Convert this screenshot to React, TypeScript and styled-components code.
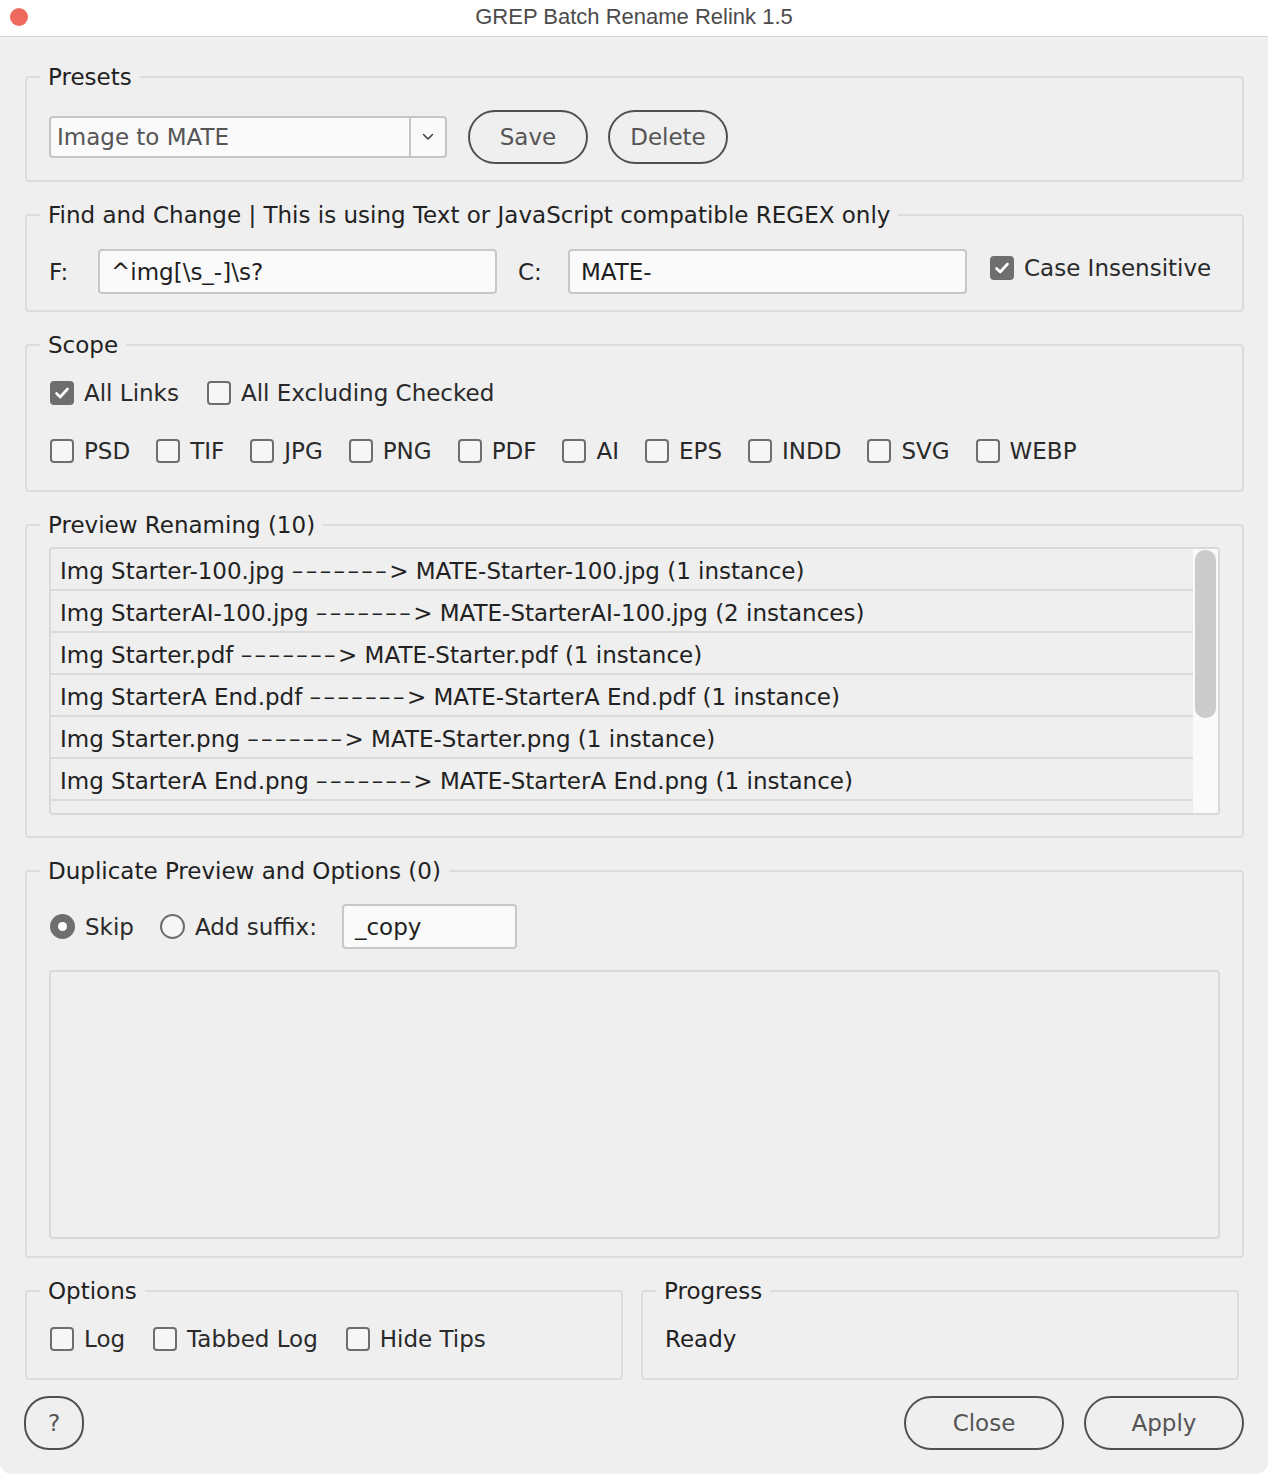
import React from "react";
import styled, { createGlobalStyle } from "styled-components";

const Global = createGlobalStyle`
  html, body { margin: 0; padding: 0; background: #ffffff; }
  body { font-family: "DejaVu Sans", "Liberation Sans", sans-serif; }
  * { box-sizing: border-box; }
`;

const Window = styled.div`
  width: 1268px;
  height: 1474px;
  background: #efefef;
  border-radius: 0 0 12px 12px;
  overflow: hidden;
  display: flex;
  flex-direction: column;
`;

const TitleBar = styled.div`
  flex: none;
  height: 37px;
  background: #ffffff;
  border-bottom: 1px solid #d4d4d4;
  display: grid;
  grid-template-columns: 1fr auto 1fr;
  align-items: center;
  padding-bottom: 4px;
`;

const CloseDot = styled.span`
  width: 18px;
  height: 18px;
  border-radius: 50%;
  background: #ee6a5e;
  margin-left: 10px;
  margin-top: 2px;
`;

const Title = styled.div`
  font-family: "Liberation Sans", Arial, sans-serif;
  font-size: 22px;
  color: #4b4b4b;
  margin-top: 2px;
`;

const Body = styled.div`
  flex: 1;
  display: flex;
  flex-direction: column;
  gap: 20px;
  padding: 27px 24px 24px 25px;
  color: #262626;
  font-size: 23px;
`;

const Panel = styled.fieldset<{ $pt: number; $pb: number }>`
  margin: 0;
  min-width: 0;
  border: 2px solid #dcdcdc;
  border-radius: 4px;
  padding: ${(p) => p.$pt}px 22px ${(p) => p.$pb}px 22px;
`;

const Legend = styled.legend`
  font-size: 23px;
  line-height: 26px;
  padding: 0 8px;
  margin-left: -9px;
  color: #222;
`;

const Row = styled.div<{ $gap: number }>`
  display: flex;
  align-items: center;
  gap: ${(p) => p.$gap}px;
`;

const Stack = styled.div<{ $gap: number }>`
  display: flex;
  flex-direction: column;
  gap: ${(p) => p.$gap}px;
`;

const Select = styled.div`
  width: 398px;
  height: 42px;
  display: flex;
  align-items: stretch;
  background: #fafafa;
  border: 2px solid #c6c6c6;
  border-radius: 4px;
  margin-right: 1px;
`;

const SelectValue = styled.div`
  flex: 1;
  display: flex;
  align-items: center;
  padding-left: 6px;
  color: #555;
`;

const SelectArrow = styled.div`
  width: 36px;
  border-left: 2px solid #c6c6c6;
  display: flex;
  align-items: center;
  justify-content: center;
`;

const PillButton = styled.button<{ $w: number }>`
  width: ${(p) => p.$w}px;
  height: 54px;
  border: 2px solid #505050;
  border-radius: 27px;
  background: transparent;
  font-family: "DejaVu Sans", sans-serif;
  font-size: 23px;
  color: #555;
  padding: 0;
  display: flex;
  align-items: center;
  justify-content: center;
`;

const HelpButton = styled(PillButton)`
  border-radius: 25px;
  margin-left: -1px;
`;

const FieldLabel = styled.span<{ $w: number }>`
  width: ${(p) => p.$w}px;
  flex: none;
`;

const TextInput = styled.div<{ $w: number; $ml?: number }>`
  width: ${(p) => p.$w}px;
  height: 45px;
  margin-left: ${(p) => p.$ml ?? 0}px;
  background: #fafafa;
  border: 2px solid #c8c8c8;
  border-radius: 4px;
  display: flex;
  align-items: center;
  padding-left: 11px;
  color: #1e1e1e;
`;

const CheckItem = styled.label<{ $lift?: number }>`
  display: flex;
  align-items: center;
  gap: 10px;
  line-height: 26px;
  color: #2a2a2a;
  margin-bottom: ${(p) => p.$lift ?? 0}px;
`;

const Box = styled.span<{ $on?: boolean }>`
  width: 24px;
  height: 24px;
  border-radius: 4px;
  border: 2px solid #6e6e6e;
  background: ${(p) => (p.$on ? "#6e6e6e" : "#f6f6f6")};
  display: flex;
  align-items: center;
  justify-content: center;
  flex: none;
  margin-left: 1px;
`;

const Radio = styled.span<{ $on?: boolean }>`
  width: 25px;
  height: 25px;
  border-radius: 50%;
  border: 2px solid #6e6e6e;
  background: ${(p) => (p.$on ? "#6e6e6e" : "#f6f6f6")};
  display: flex;
  align-items: center;
  justify-content: center;
  flex: none;
  margin-left: 1px;
`;

const RadioDot = styled.span`
  width: 9px;
  height: 9px;
  border-radius: 50%;
  background: #fff;
`;

const ListBox = styled.div`
  height: 268px;
  border: 2px solid #d9d9d9;
  border-radius: 4px;
  display: flex;
  overflow: hidden;
  background: #efefef;
`;

const ListRows = styled.div`
  flex: 1;
  overflow: hidden;
`;

const ListRow = styled.div`
  height: 42px;
  border-bottom: 2px solid #dadada;
  display: flex;
  align-items: center;
  padding: 3px 0 0 9px;
  white-space: pre;
  color: #222;
`;

const Arrow = styled.span`
  letter-spacing: 2.4px;
`;

const ScrollTrack = styled.div`
  width: 25px;
  background: #fafafa;
  padding: 1px 2px 0 2px;
`;

const ScrollThumb = styled.div`
  height: 168px;
  border-radius: 10px;
  background: #cbcbcb;
`;

const LogArea = styled.div`
  height: 269px;
  border: 2px solid #d9d9d9;
  border-radius: 4px;
  background: #efefef;
`;

const BottomGrid = styled.div`
  display: grid;
  grid-template-columns: 598px 598px;
  gap: 18px;
`;

const StatusText = styled.div`
  line-height: 26px;
  color: #222;
`;

const Footer = styled.div`
  margin-top: -4px;
  display: flex;
  align-items: center;
  gap: 20px;
`;

const Spacer = styled.div`
  flex: 1;
`;

const Check = () => (
  <svg width="16" height="14" viewBox="0 0 16 14">
    <path d="M2.5 7.5 L6.2 11 L13.5 3" fill="none" stroke="#fff" strokeWidth="2.6" strokeLinecap="round" strokeLinejoin="round" />
  </svg>
);

const CheckBox = ({ on, label, lift }: { on?: boolean; label: string; lift?: number }) => (
  <CheckItem $lift={lift}>
    <Box $on={on}>{on && <Check />}</Box>
    {label}
  </CheckItem>
);

const RadioItem = ({ on, label }: { on?: boolean; label: string }) => (
  <CheckItem>
    <Radio $on={on}>{on && <RadioDot />}</Radio>
    {label}
  </CheckItem>
);

const previews: [string, string][] = [
  ["Img Starter-100.jpg", "MATE-Starter-100.jpg (1 instance)"],
  ["Img StarterAI-100.jpg", "MATE-StarterAI-100.jpg (2 instances)"],
  ["Img Starter.pdf", "MATE-Starter.pdf (1 instance)"],
  ["Img StarterA End.pdf", "MATE-StarterA End.pdf (1 instance)"],
  ["Img Starter.png", "MATE-Starter.png (1 instance)"],
  ["Img StarterA End.png", "MATE-StarterA End.png (1 instance)"],
  ["Img Starter.psd", "MATE-Starter.psd (1 instance)"],
  ["Img StarterA End.psd", "MATE-StarterA End.psd (1 instance)"],
  ["Img Starter.tif", "MATE-Starter.tif (1 instance)"],
  ["Img StarterA End.tif", "MATE-StarterA End.tif (1 instance)"],
];

const types = ["PSD", "TIF", "JPG", "PNG", "PDF", "AI", "EPS", "INDD", "SVG", "WEBP"];

export default function App() {
  return (
    <>
      <Global />
      <Window>
        <TitleBar>
          <CloseDot />
          <Title>GREP Batch Rename Relink 1.5</Title>
          <span />
        </TitleBar>
        <Body>
          <Panel $pt={20} $pb={16}>
            <Legend>Presets</Legend>
            <Row $gap={20}>
              <Select>
                <SelectValue>Image to MATE</SelectValue>
                <SelectArrow>
                  <svg width="12" height="8" viewBox="0 0 12 8">
                    <path d="M1.5 1.5 L6 6 L10.5 1.5" fill="none" stroke="#444" strokeWidth="1.6" strokeLinecap="round" strokeLinejoin="round" />
                  </svg>
                </SelectArrow>
              </Select>
              <PillButton $w={120}>Save</PillButton>
              <PillButton $w={120}>Delete</PillButton>
            </Row>
          </Panel>

          <Panel $pt={21} $pb={16}>
            <Legend>Find and Change | This is using Text or JavaScript compatible REGEX only</Legend>
            <Row $gap={0}>
              <FieldLabel $w={49}>F:</FieldLabel>
              <TextInput $w={399}>^img[\s_-]\s?</TextInput>
              <FieldLabel $w={21} />
              <FieldLabel $w={50}>C:</FieldLabel>
              <TextInput $w={399}>MATE-</TextInput>
              <FieldLabel $w={22} />
              <CheckBox on label="Case Insensitive" lift={7} />
            </Row>
          </Panel>

          <Panel $pt={22} $pb={26}>
            <Legend>Scope</Legend>
            <Stack $gap={32}>
              <Row $gap={27}>
                <CheckBox on label="All Links" />
                <CheckBox label="All Excluding Checked" />
              </Row>
              <Row $gap={25}>
                {types.map((t) => (
                  <CheckBox key={t} label={t} />
                ))}
              </Row>
            </Stack>
          </Panel>

          <Panel $pt={9} $pb={21}>
            <Legend>Preview Renaming (10)</Legend>
            <ListBox>
              <ListRows>
                {previews.map(([from, to]) => (
                  <ListRow key={from}>
                    {from} <Arrow>–––––––</Arrow>&gt; {to}
                  </ListRow>
                ))}
              </ListRows>
              <ScrollTrack>
                <ScrollThumb />
              </ScrollTrack>
            </ListBox>
          </Panel>

          <Panel $pt={20} $pb={17}>
            <Legend>Duplicate Preview and Options (0)</Legend>
            <Stack $gap={21}>
              <Row $gap={25}>
                <RadioItem on label="Skip" />
                <RadioItem label="Add suffix:" />
                <TextInput $w={175}>_copy</TextInput>
              </Row>
              <LogArea />
            </Stack>
          </Panel>

          <BottomGrid>
            <Panel $pt={22} $pb={26}>
              <Legend>Options</Legend>
              <Row $gap={27}>
                <CheckBox label="Log" />
                <CheckBox label="Tabbed Log" />
                <CheckBox label="Hide Tips" />
              </Row>
            </Panel>
            <Panel $pt={22} $pb={26}>
              <Legend>Progress</Legend>
              <StatusText>Ready</StatusText>
            </Panel>
          </BottomGrid>

          <Footer>
            <HelpButton $w={60}>?</HelpButton>
            <Spacer />
            <PillButton $w={160}>Close</PillButton>
            <PillButton $w={160}>Apply</PillButton>
          </Footer>
        </Body>
      </Window>
    </>
  );
}
